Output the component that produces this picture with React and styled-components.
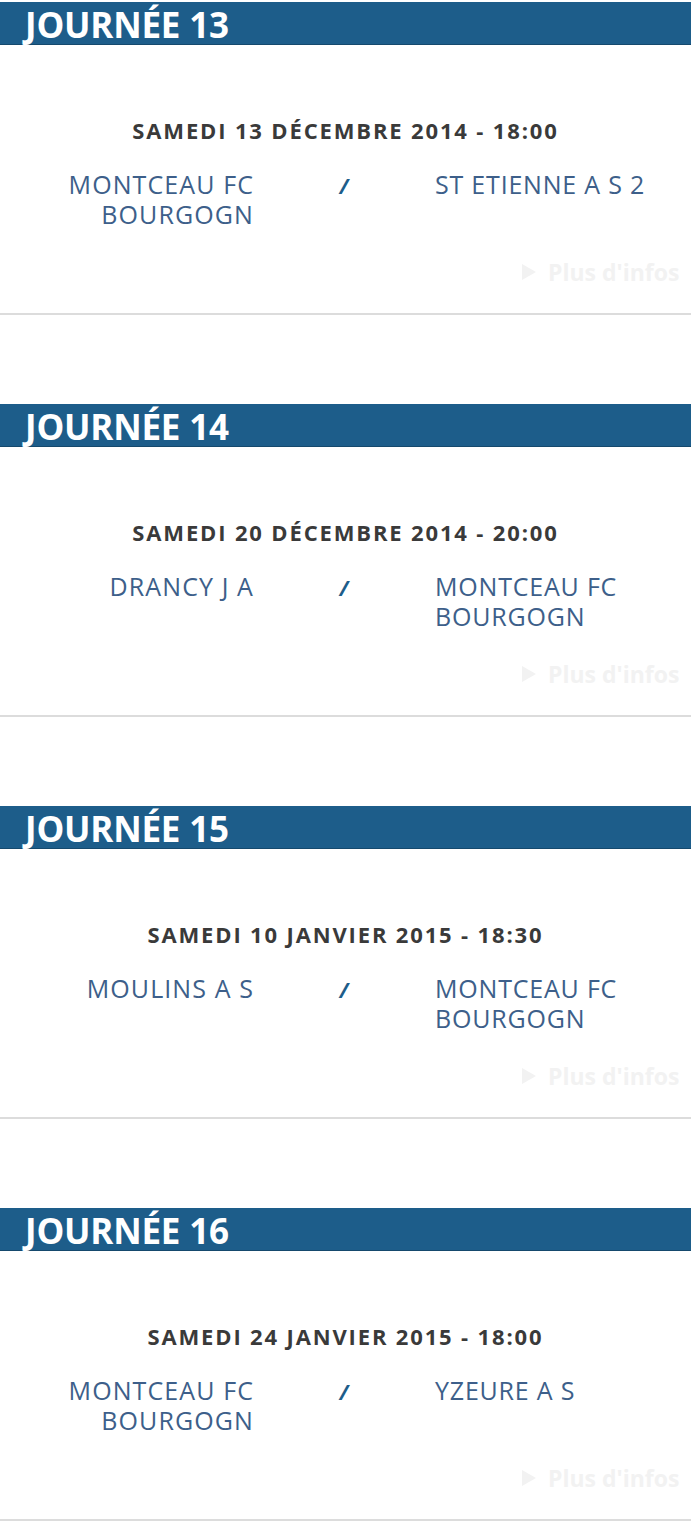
import React from "react";
import styled, { createGlobalStyle } from "styled-components";

const Global = createGlobalStyle`
  html, body { margin: 0; padding: 0; background: #fff; }
  body { font-family: "Open Sans", "Liberation Sans", sans-serif; }
`;

const Page = styled.div`
  width: 691px;
  padding-top: 2px;
  overflow: hidden;
`;

const Round = styled.section`
  height: 402px;
  overflow: hidden;
`;

const RoundTitle = styled.h2`
  margin: 0;
  height: 43px;
  background: #1d5d8a;
  color: #fff;
  font-size: 35px;
  font-weight: 700;
  line-height: 45px;
  padding-left: 25px;
  letter-spacing: -0.2px;
  box-shadow: inset 0 -1px 0 #15496d;
`;

const Body = styled.div`
  padding-top: 70px;
  border-bottom: 2px solid #dcdcdc;
`;

const DateLine = styled.div`
  text-align: center;
  font-size: 22px;
  font-weight: 700;
  color: #3a3a3a;
  line-height: 30px;
  letter-spacing: 1.85px;
`;

const Teams = styled.div`
  display: grid;
  grid-template-columns: 253px 182px 1fr;
  margin-top: 25px;
  min-height: 60px;
`;

const Team = styled.div`
  font-size: 25px;
  line-height: 29.5px;
  color: #3d5f8a;
  text-align: ${(p) => (p.$side === "left" ? "right" : "left")};
  letter-spacing: ${(p) => (p.$side === "left" ? "1.1px" : "0.8px")};
  padding-left: ${(p) => (p.$side === "left" ? "40px" : "0")};
  margin-right: ${(p) => (p.$side === "left" ? "-1px" : "0")};
`;

const Sep = styled.div`
  text-align: center;
  font-size: 21px;
  font-weight: 700;
  font-style: italic;
  color: #1d5d8a;
  line-height: 29px;
  padding-top: 2px;
`;

const MoreRow = styled.div`
  margin-top: 27px;
  height: 30px;
  margin-bottom: 26px;
  padding-left: 518px;
  white-space: nowrap;
`;

const More = styled.a`
  color: #f2f2f2;
  font-size: 23px;
  font-weight: 700;
  line-height: 30px;
  text-decoration: none;
  display: inline-flex;
  align-items: center;
  gap: 8px;
`;

const rounds = [
  { n: 13, date: "SAMEDI 13 DÉCEMBRE 2014 - 18:00", home: "MONTCEAU FC BOURGOGN", away: "ST ETIENNE A S 2" },
  { n: 14, date: "SAMEDI 20 DÉCEMBRE 2014 - 20:00", home: "DRANCY J A", away: "MONTCEAU FC BOURGOGN" },
  { n: 15, date: "SAMEDI 10 JANVIER 2015 - 18:30", home: "MOULINS A S", away: "MONTCEAU FC BOURGOGN" },
  { n: 16, date: "SAMEDI 24 JANVIER 2015 - 18:00", home: "MONTCEAU FC BOURGOGN", away: "YZEURE A S" },
];

export default function App() {
  return (
    <>
      <Global />
      <Page>
        {rounds.map((r) => (
          <Round key={r.n}>
            <RoundTitle>JOURNÉE {r.n}</RoundTitle>
            <Body>
              <DateLine>{r.date}</DateLine>
              <Teams>
                <Team $side="left">{r.home}</Team>
                <Sep>/</Sep>
                <Team $side="right">{r.away}</Team>
              </Teams>
              <MoreRow>
                <More href="#">
                  <svg width="22" height="22" viewBox="0 0 22 22">
                    <path d="M4 3 L18 11 L4 19 Z" fill="#f2f2f2" />
                  </svg>
                  Plus d'infos
                </More>
              </MoreRow>
            </Body>
          </Round>
        ))}
      </Page>
    </>
  );
}
